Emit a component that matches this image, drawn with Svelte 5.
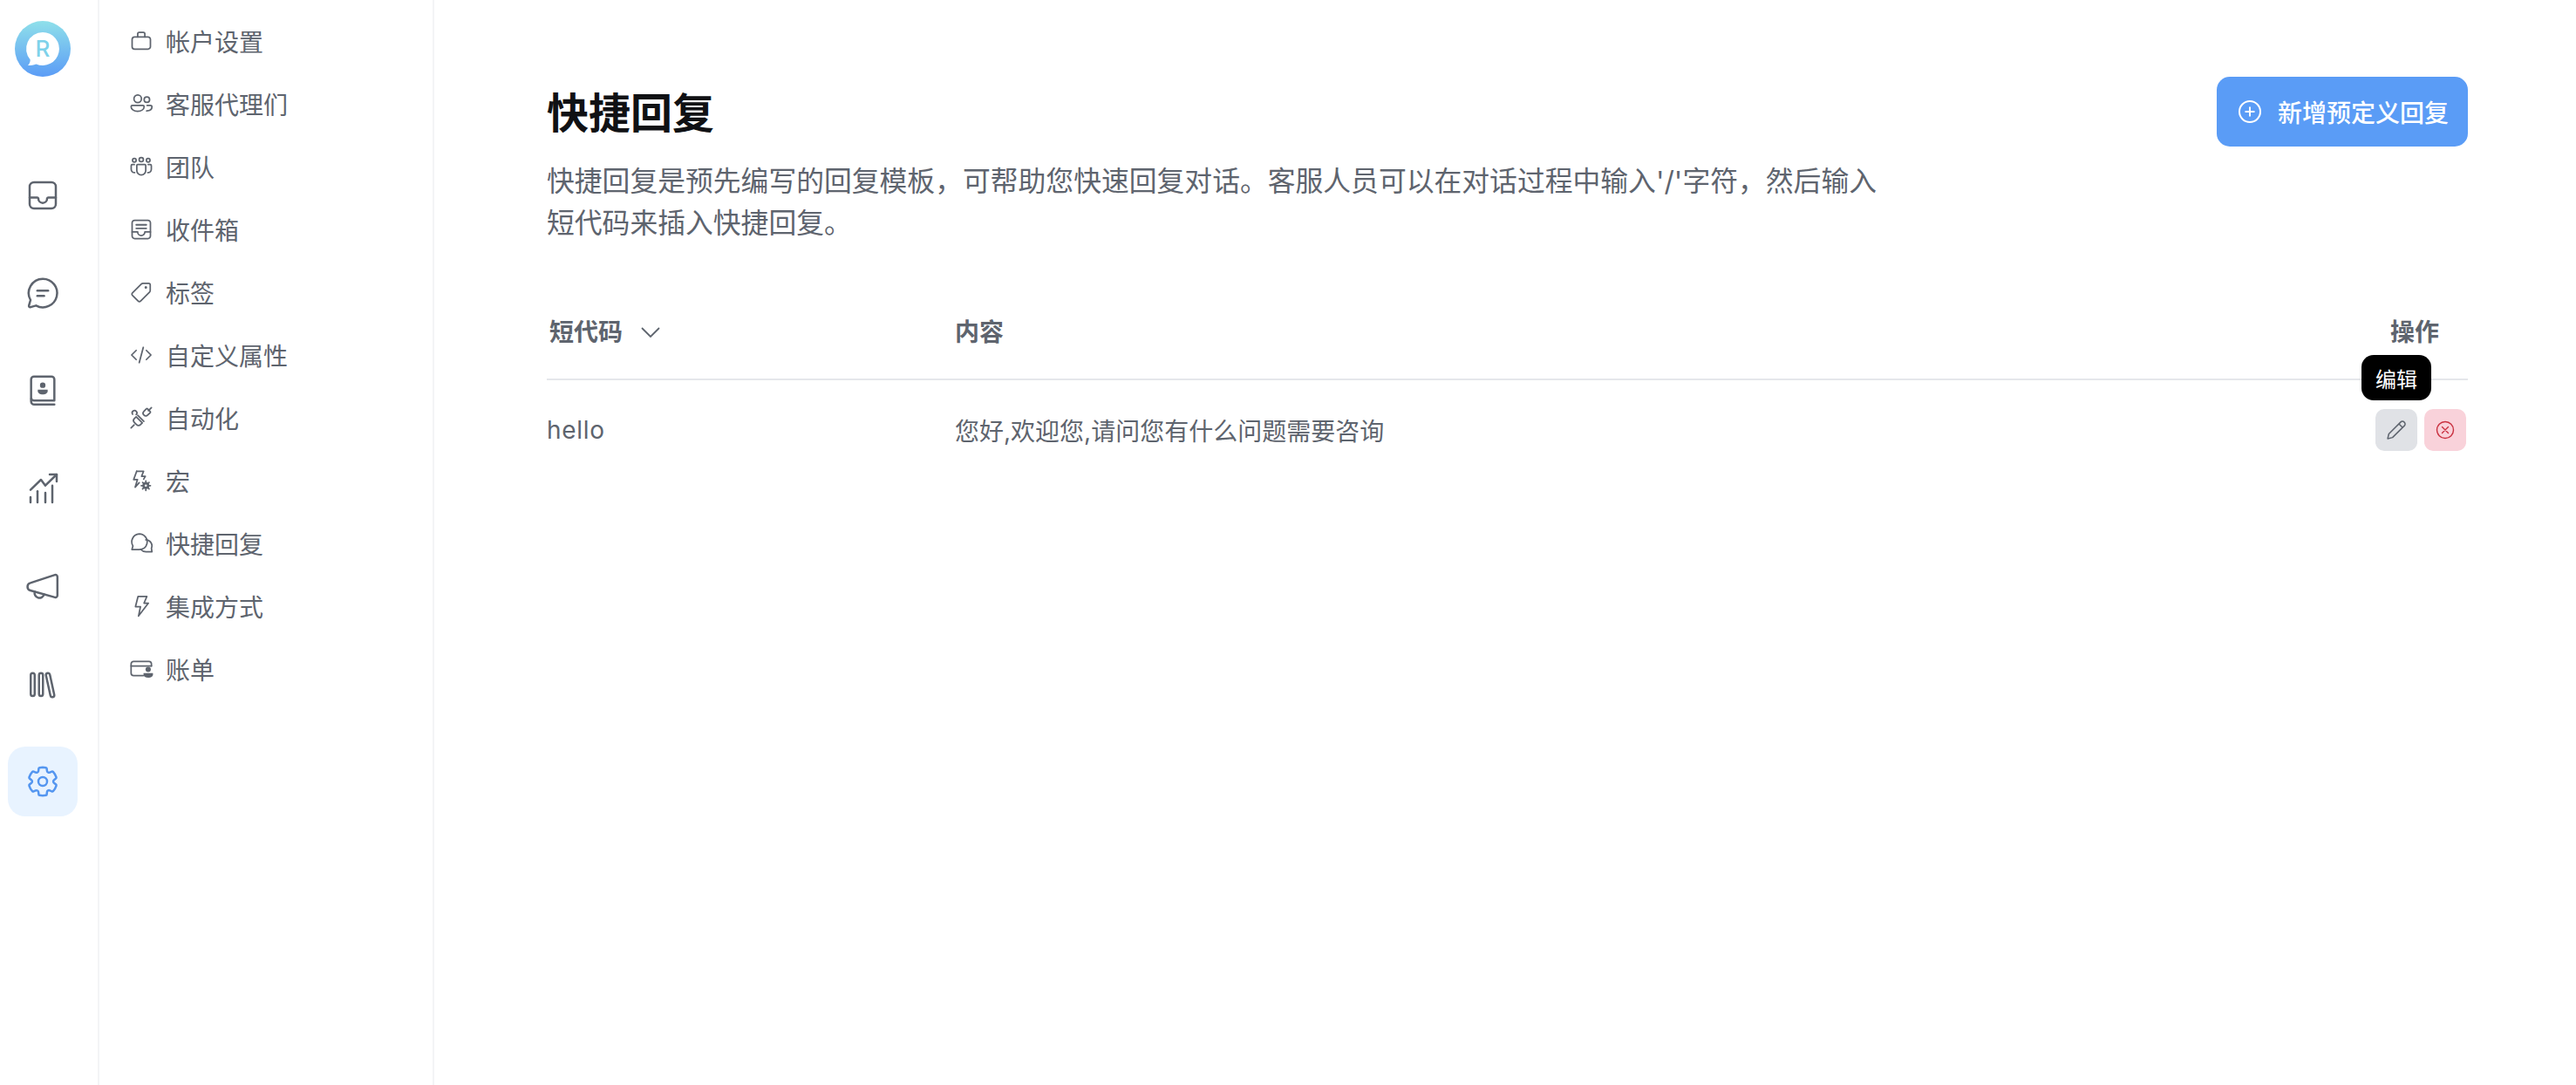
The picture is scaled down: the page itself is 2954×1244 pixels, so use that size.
<script>
  const gear = "M12.012 2.25c.734.008 1.465.093 2.182.253a.75.75 0 0 1 .582.649l.17 1.527a1.384 1.384 0 0 0 1.927 1.116l1.401-.615a.75.75 0 0 1 .85.174 9.792 9.792 0 0 1 2.204 3.792.75.75 0 0 1-.271.825l-1.242.916a1.381 1.381 0 0 0 0 2.226l1.243.915a.75.75 0 0 1 .272.826 9.797 9.797 0 0 1-2.204 3.792.75.75 0 0 1-.849.175l-1.407-.617a1.38 1.38 0 0 0-1.926 1.114l-.169 1.526a.75.75 0 0 1-.572.647 9.518 9.518 0 0 1-4.406 0 .75.75 0 0 1-.572-.647l-.168-1.524a1.382 1.382 0 0 0-1.926-1.11l-1.406.616a.75.75 0 0 1-.85-.175 9.798 9.798 0 0 1-2.204-3.796.75.75 0 0 1 .272-.826l1.243-.916a1.38 1.38 0 0 0 0-2.226l-1.243-.914a.75.75 0 0 1-.271-.826 9.793 9.793 0 0 1 2.204-3.792.75.75 0 0 1 .85-.174l1.4.615a1.387 1.387 0 0 0 1.93-1.118l.17-1.526a.75.75 0 0 1 .583-.65c.717-.159 1.45-.243 2.201-.252Z";
  const rail = [
    { id: "inbox", paths: ["M6 3h12a3 3 0 0 1 3 3v12a3 3 0 0 1-3 3H6a3 3 0 0 1-3-3V6a3 3 0 0 1 3-3Z", "M3 13.5h5.2c.4 0 .7.3.8.7a3 3 0 0 0 6 0c.1-.4.4-.7.8-.7H21"] },
    { id: "chat", paths: ["M12 2.2a9.8 9.8 0 1 1-4.6 18.4l-3.8 1.1a.9.9 0 0 1-1.1-1.1l1.1-3.8A9.8 9.8 0 0 1 12 2.2Z", "M8.3 10.3h7.4", "M8.3 14h4.6"] },
    { id: "contacts", paths: ["M6 2.2h12a2 2 0 0 1 2 2v14.6H6a2 2 0 0 1-2-2V4.2a2 2 0 0 1 2-2Z", "M4 17.5v1.8a2.2 2.2 0 0 0 2.2 2.2H20"], fill: ["M12 6.3a1.9 1.9 0 1 1 0 3.8a1.9 1.9 0 0 1 0-3.8Z", "M8.6 11.3h6.8v.8c0 1.5-1.5 2.4-3.4 2.4s-3.4-.9-3.4-2.4Z"] },
    { id: "reports", paths: ["M3.6 13l7.2-7l3 4l7.8-7.6", "M16.8 2.4h4.8v4.8", "M3.6 18v3.6", "M8.4 14v7.6", "M13.8 15v6.6", "M18.6 10v11.6"] },
    { id: "campaigns", paths: ["M3.5 9.8L20.4 4.3a1.3 1.3 0 0 1 1.7 1.2v13a1.3 1.3 0 0 1-1.7 1.2L3.5 15a2.7 2.7 0 0 1 0-5.2Z", "M6.5 15.9a3.3 3.3 0 0 0 6.4 1.8"] },
    { id: "library", paths: ["M3.75 6a1.35 1.35 0 0 1 2.7 0v13a1.35 1.35 0 0 1-2.7 0Z", "M9.45 6a1.35 1.35 0 0 1 2.7 0v13a1.35 1.35 0 0 1-2.7 0Z", "M14.28 6.29A1.35 1.35 0 0 1 16.92 5.71L19.92 19.51A1.35 1.35 0 0 1 17.28 20.09Z"] },
    { id: "settings", paths: [gear, "M12 9a3 3 0 1 1 0 6a3 3 0 0 1 0-6Z"], active: true },
  ];
  const nav = [
    { label: "帐户设置", paths: ["M5.5 8h13a2.5 2.5 0 0 1 2.5 2.5v7a2.5 2.5 0 0 1-2.5 2.5h-13a2.5 2.5 0 0 1-2.5-2.5v-7a2.5 2.5 0 0 1 2.5-2.5Z", "M8.5 8V5c0-.8.7-1.5 1.5-1.5h4c.8 0 1.5.7 1.5 1.5v3"] },
    { label: "客服代理们", paths: ["M8.5 3.4a3.7 3.7 0 1 1 0 7.4a3.7 3.7 0 0 1 0-7.4Z", "M17.5 5.2a2.7 2.7 0 1 1 0 5.4a2.7 2.7 0 0 1 0-5.4Z", "M3.2 13.5h10.4c.7 0 1.2.5 1.2 1.2c0 3-2.9 4.6-6.4 4.6s-6.4-1.6-6.4-4.6c0-.7.5-1.2 1.2-1.2Z", "M17.3 19c2.7 0 5.2-1.1 5.2-3.9c0-.9-.6-1.6-1.5-1.6h-3.3"] },
    { label: "团队", paths: ["M12 3a2.1 2.1 0 1 1 0 4.2a2.1 2.1 0 0 1 0-4.2Z", "M5.2 4a1.8 1.8 0 1 1 0 3.6a1.8 1.8 0 0 1 0-3.6Z", "M18.8 4a1.8 1.8 0 1 1 0 3.6a1.8 1.8 0 0 1 0-3.6Z", "M8.5 10h7c.5 0 .9.4.9.9v5c0 2.4-2 4.3-4.4 4.3s-4.4-1.9-4.4-4.3v-5c0-.5.4-.9.9-.9Z", "M5.2 10H3.2c-.6 0-1.1.5-1.1 1.1v3.4c0 2 1.5 3.4 3.4 3.4", "M18.8 10h2c.6 0 1.1.5 1.1 1.1v3.4c0 2-1.500 3.400-3.400 3.400"] },
    { label: "收件箱", paths: ["M5.5 3h13A2.5 2.5 0 0 1 21 5.5v13a2.5 2.5 0 0 1-2.5 2.5h-13A2.5 2.5 0 0 1 3 18.5v-13A2.5 2.5 0 0 1 5.5 3Z", "M7 7.5h10", "M7 11h10", "M3 14.5h5.5a3.5 3.5 0 0 0 7 0H21"] },
    { label: "标签", paths: ["M13.6 3.3h5.6c.9 0 1.6.7 1.6 1.6v5.4c0 .6-.2 1.1-.6 1.5l-8.8 8.9c-.7.7-1.8.7-2.5 0l-5.6-5.5c-.7-.7-.7-1.8 0-2.5l8.8-8.800c.4-.4.9-.6 1.5-.6Z"], fill: ["M16.5 6a1.3 1.3 0 1 1 0 2.6a1.3 1.3 0 0 1 0-2.6Z"] },
    { label: "自定义属性", paths: ["M7 7.5L2.5 12L7 16.5", "M17 7.5L21.5 12L17 16.5", "M14 4.5L10 19.5"] },
    { label: "自动化", paths: ["M22 2l-3 3", "M14.6 5.7l2.5-2.5c.3-.3.7-.3 1 0l2.7 2.7c.3.3.3.7 0 1l-2.5 2.5c-1.1 1.1-2.6 1.1-3.7 0c-1.1-1.1-1.1-2.6 0-3.7Z", "M8.5 9.5l6 6", "M7 11l6 6l-1.8 1.8c-1.1 1.1-2.7 1.1-3.8 0l-2.2-2.2c-1.1-1.1-1.1-2.7 0-3.8Z", "M5 19l-3 3", "M3.5 8.5a2.3 2.3 0 1 1 3.5 .3"] },
    { label: "宏", paths: ["M7.5 2.8h6.8l-2 5h3.7l-1.6 2.8", "M7.5 2.8L4.5 11h3.8l-2.3 7.5l4-4.5"], gear: true },
    { label: "快捷回复", paths: ["M10 2.7a7.8 7.8 0 0 1 7.6 9.6c-.9 3.5-4 5.7-7.6 5.7H2.8l1-3.5A7.8 7.8 0 0 1 10 2.7Z", "M16.5 8.5a6 6 0 0 1 5.5 8.3l.5 3.5h-5.500a7 7 0 0 1-5.500-2.300"] },
    { label: "集成方式", paths: ["M8.8 2.5h8.7l-2.8 6.5h4.3l-9.700 12.700l1.900-9.200H6.300Z"] },
    { label: "账单", paths: ["M14 18.500H4.500a2.500 2.500 0 0 1-2.500-2.500V7A2.500 2.500 0 0 1 4.500 4.500h15A2.500 2.500 0 0 1 22 7v2", "M2 9h20"], fill: ["M18.8 9.8a2.6 2.6 0 1 1 0 5.2a2.6 2.6 0 0 1 0-5.2Z", "M14.2 16h9.3v1.5c0 1.8-2 3-4.7 3s-4.6-1.2-4.6-3Z"] },
  ];
</script>

<div class="page">
  <aside class="rail">
    <div class="logo">
      <svg viewBox="0 0 64 64" width="64" height="64">
        <defs>
          <linearGradient id="lg" x1="0" y1="0" x2="0" y2="1">
            <stop offset="0" stop-color="#8fe0ea" />
            <stop offset="1" stop-color="#5b9cf6" />
          </linearGradient>
        </defs>
        <circle cx="32" cy="32" r="32" fill="url(#lg)" />
        <path d="M32 13a19 19 0 1 1-7.5 36.5c-3 1.2-6 1.5-9.5 1.5c1.8-2 2.7-4 2.7-6.5A19 19 0 0 1 32 13Z" fill="#fff" />
        <text x="32" y="41" text-anchor="middle" class="logo-r">R</text>
      </svg>
    </div>
    <div class="rail-items">
      {#each rail as item}
        <div class="rail-item" class:active={item.active}>
          <svg viewBox="0 0 24 24" width="40" height="40" class="rail-icon">
            {#each item.paths as d}<path {d} />{/each}
            {#each item.fill ?? [] as d}<path {d} class="solid" />{/each}
          </svg>
        </div>
      {/each}
    </div>
  </aside>

  <nav class="sidebar">
    {#each nav as item}
      <div class="nav-item">
        <svg viewBox="0 0 24 24" width="28" height="28" class="nav-icon">
          {#each item.paths as d}<path {d} />{/each}
          {#each item.fill ?? [] as d}<path {d} class="solid" />{/each}
          {#if item.gear}
            <circle cx="16.5" cy="17" r="3.4" class="solid" />
            <path d="M16.5 12.3v2M16.5 19.7v2M12 17h2M19 17h2M13.3 13.8l1.4 1.4M18.3 18.8l1.4 1.4M19.7 13.8l-1.4 1.4M14.7 18.8l-1.4 1.4" />
            <circle cx="16.5" cy="17" r="1.1" class="hole" />
          {/if}
        </svg>
        <span>{item.label}</span>
      </div>
    {/each}
  </nav>

  <main class="main">
    <header class="head">
      <div class="intro">
        <h1>快捷回复</h1>
        <p>快捷回复是预先编写的回复模板&#xFF0C;可帮助您快速回复对话。客服人员可以在对话过程中输入'/'字符&#xFF0C;然后输入短代码来插入快捷回复。</p>
      </div>
      <button class="add">
        <svg viewBox="0 0 26 26" width="26" height="26">
          <circle cx="13" cy="13" r="12" />
          <path d="M13 7.5v11M7.5 13h11" />
        </svg>
        <span>新增预定义回复</span>
      </button>
    </header>

    <section class="table">
      <div class="row header">
        <div class="col-code">
          <span>短代码</span>
          <svg viewBox="0 0 22 12" width="22" height="12" class="chev"><path d="M1 1l10 10L21 1" /></svg>
        </div>
        <div class="col-content">内容</div>
        <div class="col-actions-head">操作</div>
      </div>
      <div class="row body">
        <div class="col-code cell-code">hello</div>
        <div class="col-content">您好,欢迎您,请问您有什么问题需要咨询</div>
        <div class="col-actions">
          <div class="tooltip">编辑</div>
          <div class="act edit">
            <svg viewBox="0 0 24 24" width="28" height="28"><path d="M3.5 20.5l1.1-4.6L16.3 4.2a2.3 2.3 0 0 1 3.3 0l.3.3a2.3 2.3 0 0 1 0 3.3L8.2 19.4Z" /><path d="M14.5 6l3.500 3.500" /></svg>
          </div>
          <div class="act del">
            <svg viewBox="0 0 24 24" width="24" height="24"><circle cx="12" cy="12" r="9.5" /><path d="M8.5 8.5l7 7M15.5 8.5l-7 7" /></svg>
          </div>
        </div>
      </div>
    </section>
  </main>
</div>

<style>
  :global(body) { margin: 0; background: #fff; }
  .page {
    display: flex;
    width: 2954px;
    height: 1244px;
    overflow: hidden;
    font-family: Inter, "Noto Sans CJK SC", sans-serif;
    color: #5e646e;
    background: #fff;
  }
  .rail {
    box-sizing: content-box;
    width: 112px;
    flex: none;
    border-right: 2px solid #f3f4f6;
    display: flex;
    flex-direction: column;
    align-items: center;
  }
  .logo { height: 64px; margin-top: 24px; margin-left: -14px; }
  .logo-r { font-family: Inter, sans-serif; font-size: 26px; font-weight: 500; fill: #7fd2ea; }
  .rail-items { margin-top: 96px; display: flex; flex-direction: column; gap: 32px; width: 80px; margin-left: -14px; }
  .rail-item { width: 80px; height: 80px; border-radius: 20px; display: flex; align-items: center; justify-content: center; }
  .rail-item.active { background: #e8f3ff; }
  .rail-icon path { fill: none; stroke: #5e646e; stroke-width: 1.5; stroke-linecap: round; stroke-linejoin: round; }
  .rail-icon path.solid { fill: #5e646e; stroke: none; }
  .rail-item.active .rail-icon path { stroke: #5496f0; }

  .sidebar {
    flex: none;
    border-right: 2px solid #f3f4f6;
    padding: 11px 0 0 34px;
    box-sizing: border-box;
    width: 384px;
  }
  .nav-item { height: 72px; display: flex; align-items: center; gap: 14px; font-size: 28px; }
  .nav-icon { flex: none; }
  .nav-icon path, .nav-icon circle { fill: none; stroke: #5e646e; stroke-width: 1.5; stroke-linecap: round; stroke-linejoin: round; }
  .nav-icon .solid { fill: #5e646e; stroke: none; }
  .nav-icon .hole { fill: #fff; stroke: none; }

  .main { flex: 1; padding: 88px 124px 0 129px; box-sizing: border-box; min-width: 0; }
  .head { display: flex; justify-content: space-between; align-items: flex-start; }
  .intro { width: 1535px; }
  h1 { margin: 15px 0 0; font-size: 48px; line-height: 54px; font-weight: 700; color: #101114; }
  p { margin: 27px 0 0; font-size: 31.8px; line-height: 48px; color: #5e646e; }
  .add {
    width: 288px; height: 80px; flex: none; border: 0; border-radius: 15px; background: #5a9cf6; color: #fff;
    font: 500 28px Inter, "Noto Sans CJK SC", sans-serif;
    display: flex; align-items: center; gap: 19px; padding: 0 0 0 25px; box-sizing: border-box;
  }
  .add svg { flex: none; fill: none; stroke: #fff; stroke-width: 2; }
  .table { margin-top: 49px; }
  .row { display: flex; align-items: center; }
  .header { height: 107px; border-bottom: 2px solid #e5e7eb; font-size: 28px; font-weight: 600; align-items: flex-start; padding-top: 32px; box-sizing: border-box; line-height: 40px; }
  .body { height: 114px; font-size: 28px; }
  .col-code { width: 465px; box-sizing: border-box; padding-left: 3px; display: flex; align-items: center; gap: 21px; }
  .cell-code { padding-left: 0; letter-spacing: 0.7px; }
  .col-content { flex: 1; margin-left: 3px; }
  .col-actions-head { width: 88px; margin-right: 33px; text-align: right; }
  .chev { fill: none; stroke: #5e646e; stroke-width: 1.8; }
  .col-actions { position: relative; display: flex; gap: 8px; margin-right: 2px; }
  .act { width: 48px; height: 48px; border-radius: 10px; display: flex; align-items: center; justify-content: center; }
  .edit { background: #e0e2e6; }
  .edit svg { fill: none; stroke: #5e646e; stroke-width: 1.3; stroke-linejoin: round; }
  .del { background: #f9d2da; }
  .del svg { fill: none; stroke: #c9303f; stroke-width: 1.4; stroke-linecap: round; }
  .tooltip {
    position: absolute; left: -16px; top: -62px; width: 80px; height: 52px; border-radius: 14px;
    background: #000; color: #fff; font-size: 24px; display: flex; align-items: center; justify-content: center;
  }
</style>
